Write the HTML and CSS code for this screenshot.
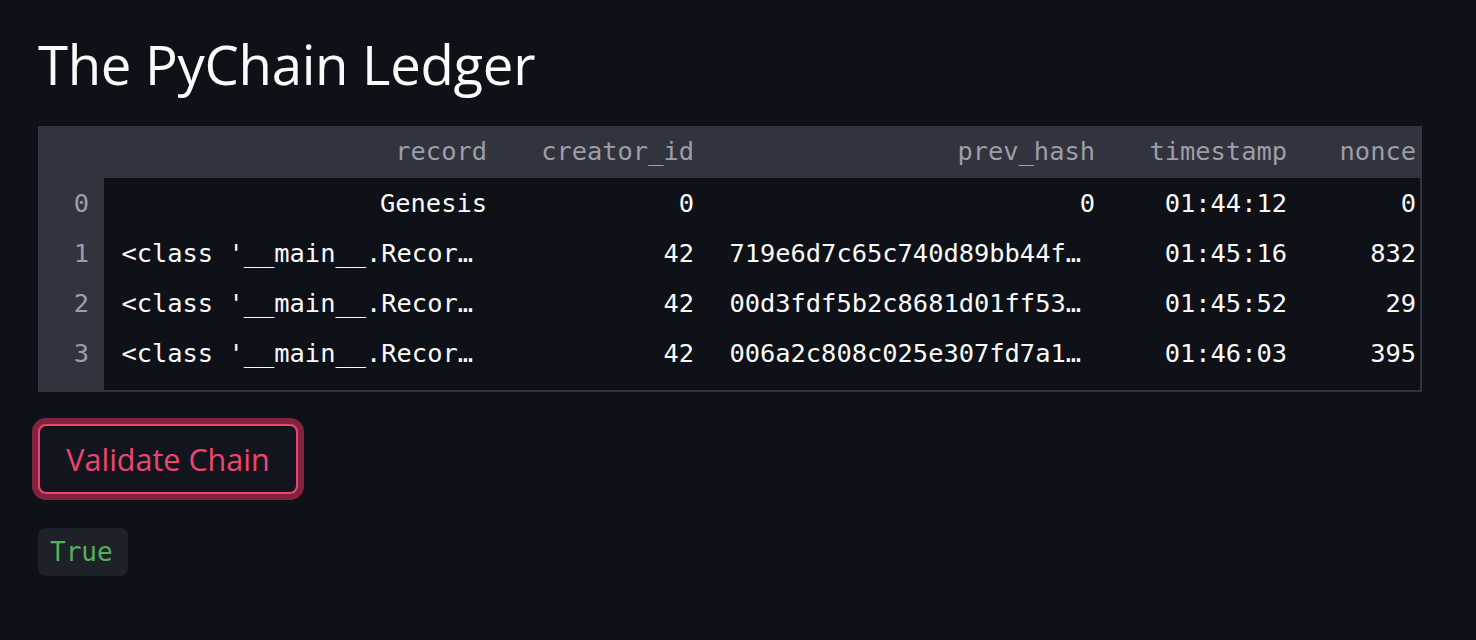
FILE: index.html
```html
<!DOCTYPE html>
<html>
<head>
<meta charset="utf-8">
<link rel="stylesheet" href="styles.css">
</head>
<body>
<main class="page">
  <h1 class="title">The PyChain Ledger</h1>
  <div class="table-wrap">
    <div class="grid">
      <div class="hd idx"></div>
      <div class="hd">record</div>
      <div class="hd">creator_id</div>
      <div class="hd">prev_hash</div>
      <div class="hd">timestamp</div>
      <div class="hd last">nonce</div>

      <div class="idx">0</div>
      <div class="cell">Genesis</div>
      <div class="cell">0</div>
      <div class="cell">0</div>
      <div class="cell">01:44:12</div>
      <div class="cell last">0</div>

      <div class="idx">1</div>
      <div class="cell trunc">&lt;class '__main__.Recor…</div>
      <div class="cell">42</div>
      <div class="cell trunc">719e6d7c65c740d89bb44f…</div>
      <div class="cell">01:45:16</div>
      <div class="cell last">832</div>

      <div class="idx">2</div>
      <div class="cell trunc">&lt;class '__main__.Recor…</div>
      <div class="cell">42</div>
      <div class="cell trunc">00d3fdf5b2c8681d01ff53…</div>
      <div class="cell">01:45:52</div>
      <div class="cell last">29</div>

      <div class="idx">3</div>
      <div class="cell trunc">&lt;class '__main__.Recor…</div>
      <div class="cell">42</div>
      <div class="cell trunc">006a2c808c025e307fd7a1…</div>
      <div class="cell">01:46:03</div>
      <div class="cell last">395</div>

      <div class="idx filler"></div>
      <div class="cell filler span"></div>
    </div>
  </div>
  <button class="btn" type="button">Validate Chain</button>
  <div class="code"><code>True</code></div>
</main>
</body>
</html>
```

FILE: styles.css
```css
html, body {
  margin: 0;
  padding: 0;
  background: #0e1117;
}
body {
  width: 1476px;
  height: 640px;
  overflow: hidden;
  font-family: "Open Sans", "DejaVu Sans", sans-serif;
  color: #fafafa;
}
.page {
  padding: 0 0 0 38px;
  display: flex;
  flex-direction: column;
  align-items: flex-start;
}
.title {
  margin: 26px 0 0 0;
  font-size: 54.5px;
  font-weight: 400;
  line-height: 76px;
  height: 76px;
  color: #fafafa;
  letter-spacing: -0.3px;
}
.table-wrap {
  margin-top: 24px;
  width: 1382px;
  background: #31333f;
  padding: 0 2px 2px 0;
}
.grid {
  display: grid;
  grid-template-columns: 66px 389px 207px 401px 192px 127px;
  grid-template-rows: 52px repeat(4, 50px) 12px;
  font-family: "DejaVu Sans Mono", "Liberation Mono", monospace;
  font-size: 25.4px;
}
.grid > div {
  display: flex;
  align-items: center;
  justify-content: flex-end;
  white-space: nowrap;
  overflow: hidden;
}
.hd {
  color: #9d9ea5;
  padding-right: 6px;
  padding-bottom: 2px;
}
.idx {
  color: #9d9ea5;
  padding-right: 15px;
}
.cell {
  background: #0e1117;
  color: #fafafa;
  padding-right: 6px;
}
.cell.trunc {
  padding-right: 20px;
}
.grid > .last {
  padding-right: 4px;
}
.span {
  grid-column: 2 / 7;
}
.btn {
  margin-top: 32px;
  width: 260px;
  height: 70px;
  border: 2px solid #ee4570;
  border-radius: 8px;
  background: #12151d;
  color: #ee4570;
  font-family: "Open Sans", "DejaVu Sans", sans-serif;
  font-size: 30.5px;
  padding: 0;
  box-shadow: 0 0 0 6px rgba(246, 51, 102, 0.5);
}
.code {
  margin-top: 34px;
  width: 90px;
  height: 48px;
  background: #1f2129;
  border-radius: 8px;
  display: flex;
  align-items: center;
  padding-left: 12px;
  box-sizing: border-box;
}
.code code {
  font-family: "DejaVu Sans Mono", "Liberation Mono", monospace;
  font-size: 26px;
  color: #50b15a;
}
```
